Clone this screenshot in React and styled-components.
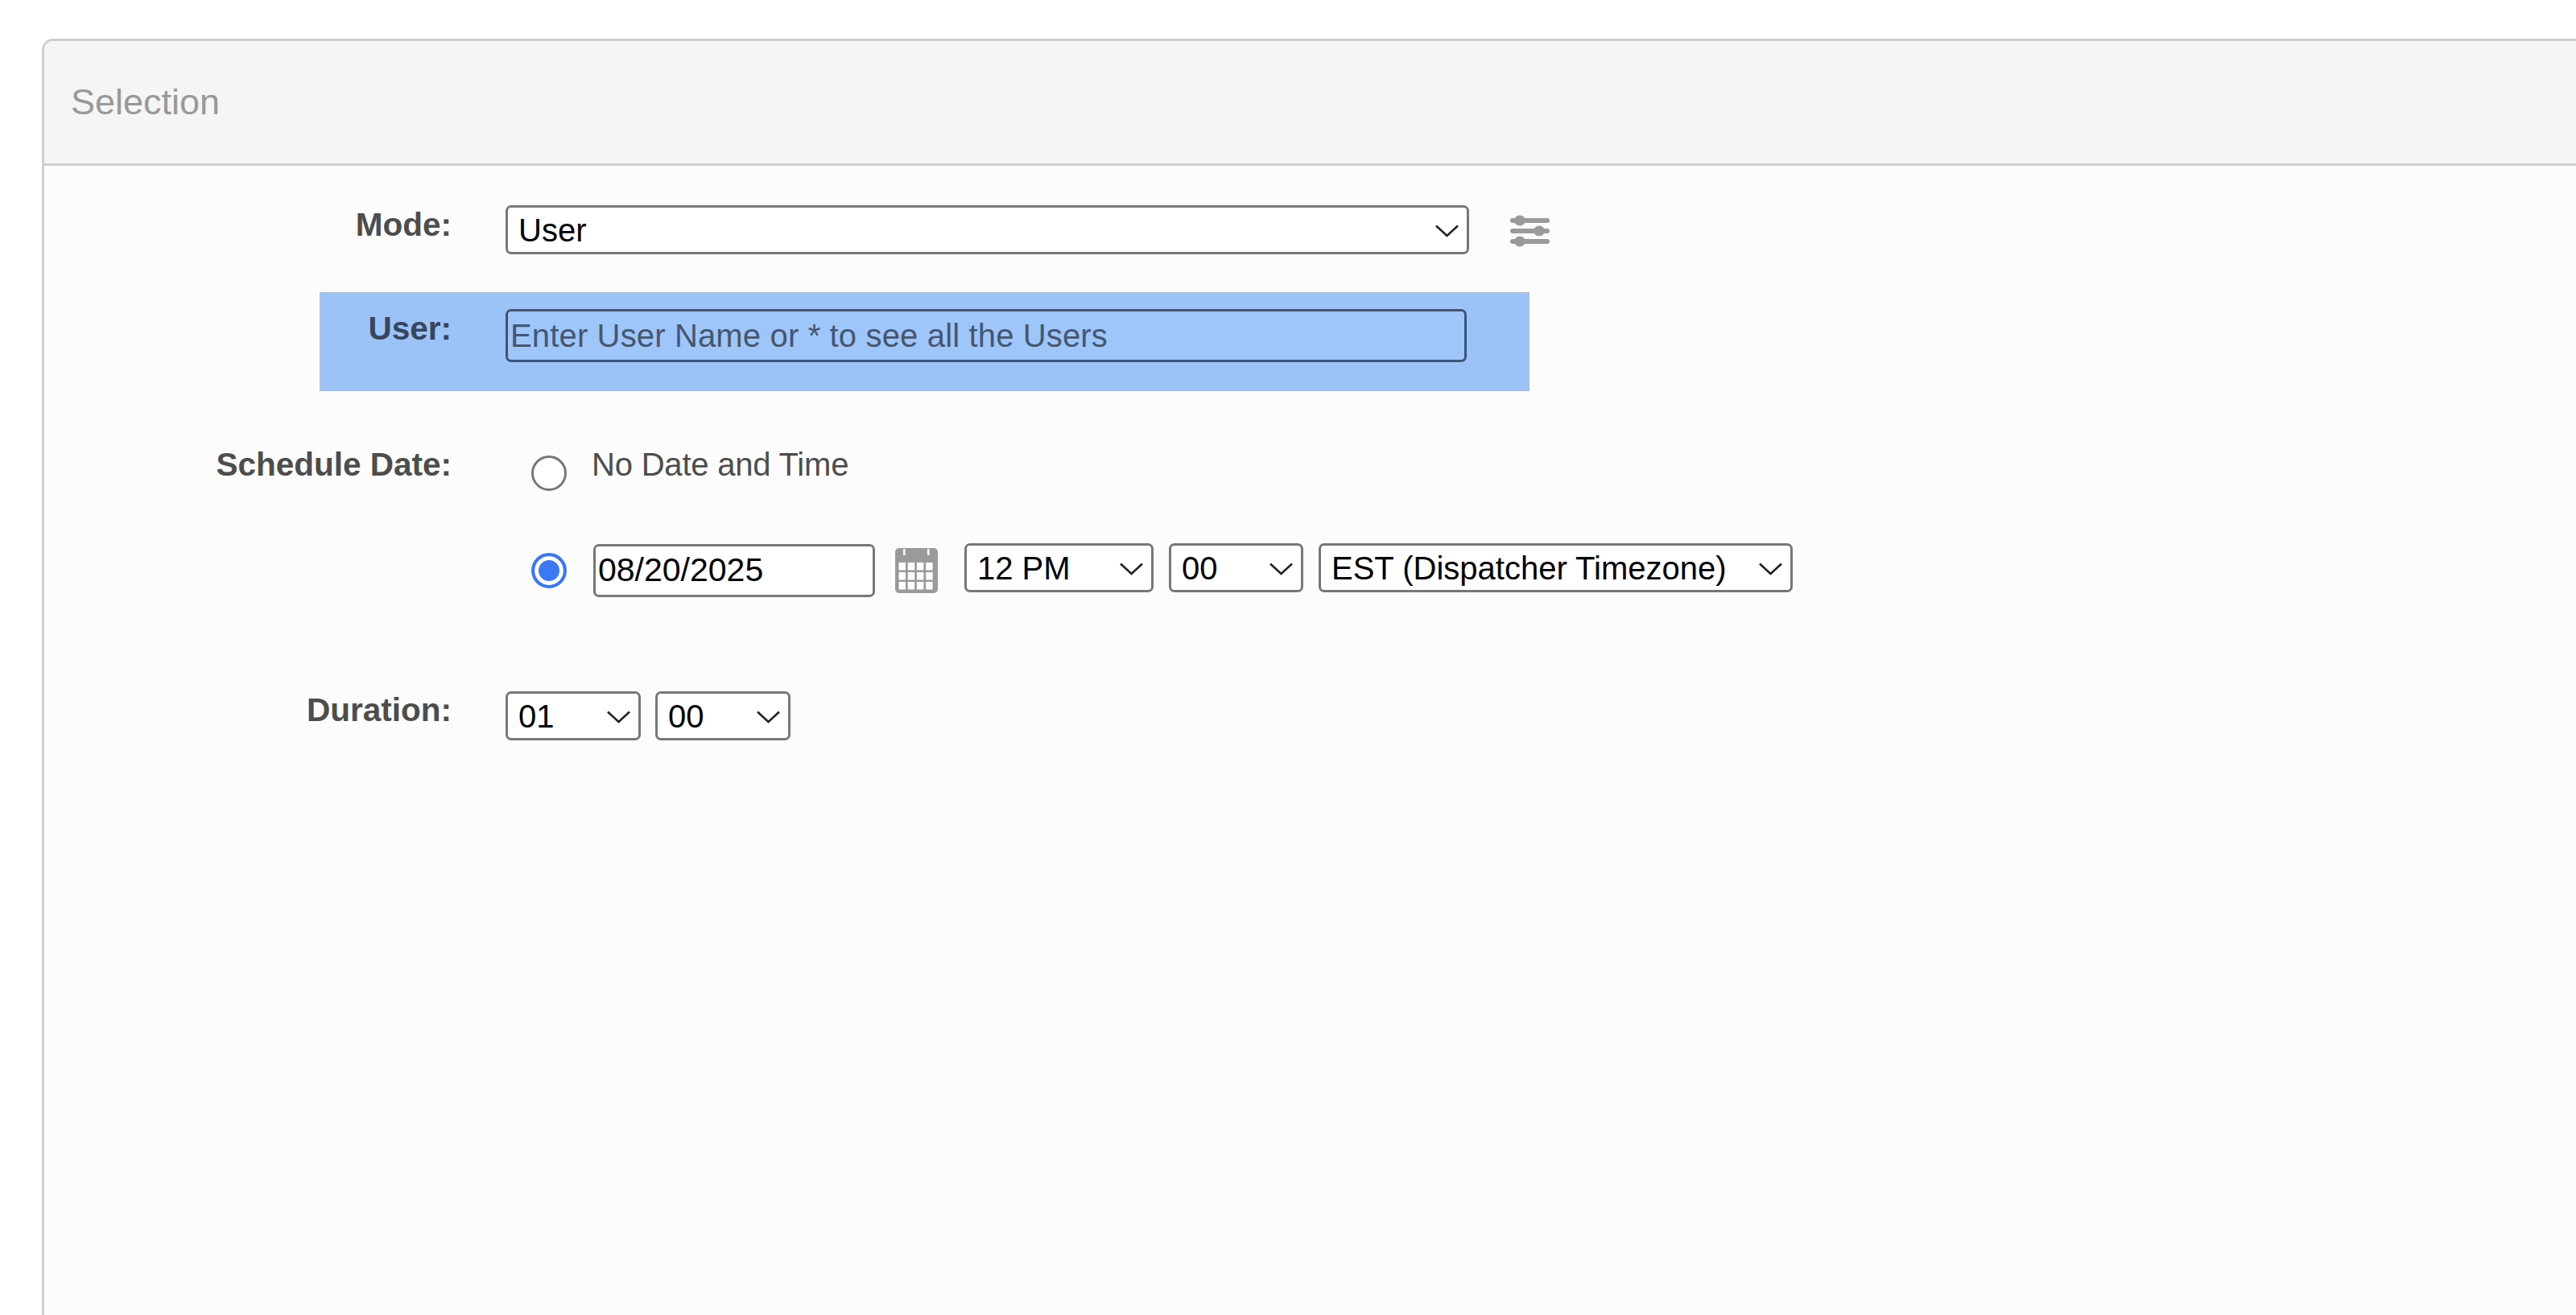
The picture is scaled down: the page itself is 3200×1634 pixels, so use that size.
import React from "react";
import styled, { createGlobalStyle } from "styled-components";

const GlobalStyle = createGlobalStyle`
  html, body {
    margin: 0;
    padding: 0;
    height: 100%;
    background: #ffffff;
    overflow: hidden;
    font-family: "Liberation Sans", Arial, sans-serif;
  }
`;

const Page = styled.div`
  height: 1634px;
  padding: 48px 0 0 52px;
  box-sizing: border-box;
  overflow: hidden;
`;

const Panel = styled.section`
  width: 3300px;
  height: 1700px;
  box-sizing: border-box;
  background: #fcfcfc;
  border: 3px solid #cfcfcf;
  border-radius: 14px 0 0 0;
`;

const PanelHeader = styled.header`
  height: 155px;
  box-sizing: border-box;
  padding: 0 0 0 33px;
  display: flex;
  align-items: center;
  background: #f5f5f5;
  border-bottom: 3px solid #cfcfcf;
  border-radius: 11px 0 0 0;
  color: #999999;
  font-size: 45px;
`;

const PanelBody = styled.div`
  padding-top: 49px;
`;

const Row = styled.div`
  display: grid;
  grid-template-columns: 506px 1fr;
  column-gap: 67px;
  margin-top: ${(p) => p.$top || 0}px;
`;

const Label = styled.label`
  font-size: 40.5px;
  line-height: 46px;
  padding-top: ${(p) => p.$pad ?? 1}px;
  font-weight: 700;
  text-align: right;
  color: ${(p) => p.$color || "#4d4d4d"};
`;

const Controls = styled.div`
  display: flex;
  align-items: center;
  gap: ${(p) => p.$gap || 0}px;
  ${(p) => p.$top && "align-self: flex-start; margin-top: -1px;"}
`;

const Band = styled.div`
  width: 1503px;
  height: 123px;
  box-sizing: border-box;
  margin: 47px 0 0 342px;
  padding-top: 21px;
  display: grid;
  grid-template-columns: 164px 1fr;
  column-gap: 67px;
  background: #9cc3f7;
`;

const UserInput = styled.input`
  width: 1194px;
  height: 66px;
  box-sizing: border-box;
  padding: 0 0 0 3px;
  border: 3px solid #3f5475;
  border-radius: 7px;
  background: #9fc6fa;
  outline: none;
  font: 40px "Liberation Sans", Arial, sans-serif;
  letter-spacing: 0.15px;
  &::placeholder {
    color: #46566f;
    opacity: 1;
  }
`;

const SelectWrap = styled.div`
  position: relative;
  width: ${(p) => p.$width}px;
  height: 61px;
  flex: none;
`;

const Select = styled.select`
  appearance: none;
  width: 100%;
  height: 100%;
  box-sizing: border-box;
  margin: 0;
  padding: 0 0 0 13px;
  border: 3px solid #777777;
  border-radius: 7px;
  background: #ffffff;
  color: #000000;
  outline: none;
  font: 40px "Liberation Sans", Arial, sans-serif;
`;

const Chevron = styled.svg`
  position: absolute;
  right: 13px;
  top: 50%;
  width: 29px;
  height: 16px;
  margin-top: -7px;
  pointer-events: none;
`;

const ScheduleArea = styled.div`
  display: flex;
  flex-direction: column;
`;

const OptionRow = styled.div`
  display: flex;
  align-items: ${(p) => (p.$start ? "flex-start" : "center")};
  margin-left: 32px;
  margin-top: ${(p) => p.$top || 0}px;
`;

const Radio = styled.input`
  appearance: none;
  flex: none;
  width: 44px;
  height: 44px;
  box-sizing: border-box;
  margin: ${(p) => (p.$nudge ? "12px" : "0")} 33px 0 0;
  border: 3px solid #767676;
  border-radius: 50%;
  background: #ffffff;
  &:checked {
    border: 4px solid #3b78f5;
    background: #3b78f5;
    box-shadow: inset 0 0 0 5px #ffffff;
  }
`;

const OptionText = styled.span`
  margin-left: -2px;
  font-size: 40px;
  line-height: 46px;
  letter-spacing: -0.2px;
  color: #4d4d4d;
`;

const DateInput = styled.input`
  width: 350px;
  height: 66px;
  box-sizing: border-box;
  padding: 0 0 2px 3px;
  border: 3px solid #777777;
  border-radius: 7px;
  background: #ffffff;
  color: #000000;
  outline: none;
  font: 41px "Liberation Sans", Arial, sans-serif;
`;

const CalendarIcon = styled.svg`
  flex: none;
  width: 53px;
  height: 56px;
  margin: 0 33px 0 25px;
`;

const SlidersIcon = styled.svg`
  flex: none;
  width: 49px;
  height: 40px;
  margin: 3px 0 0 51px;
`;

const Arrow = () => (
  <Chevron viewBox="0 0 29 16" fill="none" stroke="#222222" strokeWidth="2.6">
    <path d="M1 1.5 14.5 14 28 1.5" />
  </Chevron>
);

const Dropdown = ({ width, value }) => (
  <SelectWrap $width={width}>
    <Select defaultValue={value}>
      <option>{value}</option>
    </Select>
    <Arrow />
  </SelectWrap>
);

const Sliders = () => (
  <SlidersIcon viewBox="0 0 49 40" fill="#9a9a9a">
    <rect x="0" y="4" width="49" height="6" rx="3" />
    <rect x="0" y="17" width="49" height="6" rx="3" />
    <rect x="0" y="30" width="49" height="6" rx="3" />
    <ellipse cx="12" cy="7" rx="7" ry="6.5" />
    <ellipse cx="36" cy="20" rx="7" ry="6.5" />
    <ellipse cx="12" cy="33" rx="7" ry="6.5" />
  </SlidersIcon>
);

const Calendar = () => {
  const cells = [];
  for (let r = 0; r < 3; r++) {
    for (let c = 0; c < 4; c++) {
      cells.push(<rect key={`${r}-${c}`} x={4.5 + c * 11.2} y={18 + r * 12} width="8.5" height="9.5" fill="#fcfcfc" />);
    }
  }
  return (
    <CalendarIcon viewBox="0 0 53 56">
      <rect x="0" y="0" width="53" height="56" rx="5" fill="#9a9a9a" />
      <rect x="10" y="1" width="2.5" height="8" fill="#fcfcfc" />
      <rect x="40" y="1" width="2.5" height="8" fill="#fcfcfc" />
      {cells}
    </CalendarIcon>
  );
};

const App = () => (
  <>
    <GlobalStyle />
    <Page>
      <Panel>
        <PanelHeader>Selection</PanelHeader>
        <PanelBody>
          <Row>
            <Label>Mode:</Label>
            <Controls>
              <Dropdown width={1197} value="User" />
              <Sliders />
            </Controls>
          </Row>
          <Band>
            <Label $color="#36465e">User:</Label>
            <UserInput placeholder="Enter User Name or * to see all the Users" />
          </Band>
          <Row $top={68}>
            <Label $pad={0}>Schedule Date:</Label>
            <ScheduleArea>
              <OptionRow $start>
                <Radio type="radio" name="schedule" $nudge />
                <OptionText>No Date and Time</OptionText>
              </OptionRow>
              <OptionRow $top={66}>
                <Radio type="radio" name="schedule" defaultChecked />
                <DateInput defaultValue="08/20/2025" />
                <Calendar />
                <Controls $gap={19} $top>
                  <Dropdown width={235} value="12 PM" />
                  <Dropdown width={167} value="00" />
                  <Dropdown width={589} value="EST (Dispatcher Timezone)" />
                </Controls>
              </OptionRow>
            </ScheduleArea>
          </Row>
          <Row $top={117}>
            <Label $pad={0}>Duration:</Label>
            <Controls $gap={18}>
              <Dropdown width={168} value="01" />
              <Dropdown width={168} value="00" />
            </Controls>
          </Row>
        </PanelBody>
      </Panel>
    </Page>
  </>
);

export default App;
